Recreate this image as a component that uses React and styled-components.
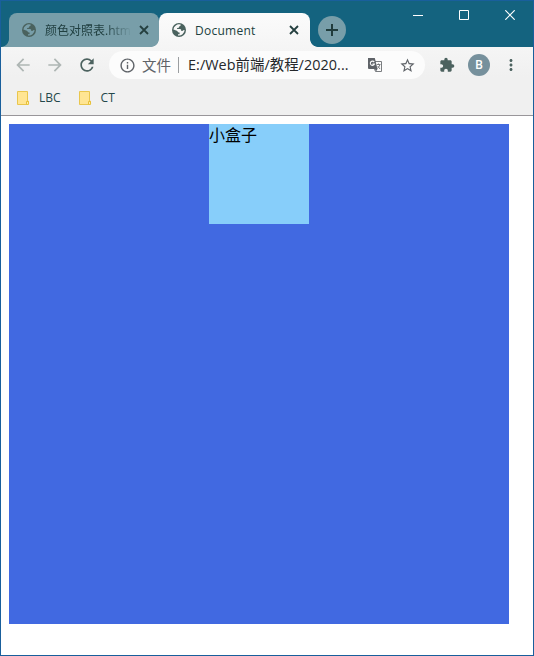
import React from "react";
import styled, { createGlobalStyle } from "styled-components";
import {
  MdArrowBack,
  MdArrowForward,
  MdRefresh,
  MdInfoOutline,
  MdStarBorder,
  MdExtension,
  MdMoreVert,
} from "react-icons/md";

const GlobalStyle = createGlobalStyle`
  * { box-sizing: border-box; }
  html, body { margin: 0; padding: 0; }
  body { font-family: "Open Sans", "Noto Sans CJK SC", sans-serif; }
`;

const Window = styled.div`
  width: 534px;
  height: 656px;
  border: 1px solid #195f9c;
  background: #fff;
  display: flex;
  flex-direction: column;
  overflow: hidden;
`;

const TabStrip = styled.div`
  height: 46px;
  flex: none;
  background: #14637f;
  display: flex;
  padding-left: 8px;
`;

const Tab = styled.div`
  position: relative;
  z-index: ${(p) => (p.$active ? 1 : 0)};
  width: ${(p) => (p.$active ? 151 : 150)}px;
  height: 34px;
  margin-top: 12px;
  padding: 0 ${(p) => (p.$active ? 10 : 9)}px 0 13px;
  display: flex;
  align-items: center;
  border-radius: 8px 8px 0 0;
  background: ${(p) => (p.$active ? "linear-gradient(#fbfbfb, #f5f5f5)" : "#789ea9")};
  &::before,
  &::after {
    content: "";
    position: absolute;
    bottom: 0;
    width: 8px;
    height: 8px;
  }
  &::before {
    left: -8px;
    background: radial-gradient(circle at 0 0, transparent 7.5px, ${(p) => (p.$active ? "#f5f5f5" : "#789ea9")} 8.2px);
  }
  &::after {
    right: -8px;
    background: radial-gradient(circle at 100% 0, transparent 7.5px, ${(p) => (p.$active ? "#f5f5f5" : "#789ea9")} 8.2px);
  }
`;

const TabTitle = styled.span`
  flex: 1;
  min-width: 0;
  margin-left: 9px;
  margin-right: 8px;
  padding-top: 1px;
  overflow: hidden;
  white-space: nowrap;
  font-size: 12px;
  line-height: 18px;
  letter-spacing: ${(p) => (p.$fade ? 0 : 0.25)}px;
  color: #203f40;
  ${(p) => p.$fade && "mask-image: linear-gradient(90deg, #000 72%, transparent 102%);"}
`;

const NewTab = styled.div`
  width: 28px;
  height: 28px;
  margin: 15px 0 0 8px;
  border-radius: 50%;
  background: #789ea9;
  display: flex;
  align-items: center;
  justify-content: center;
`;

const WindowControls = styled.div`
  display: flex;
  margin-left: auto;
  height: 28px;
`;

const ControlButton = styled.div`
  width: 46px;
  display: flex;
  align-items: center;
  justify-content: center;
`;

const Chrome = styled.div`
  height: 69px;
  flex: none;
  background: linear-gradient(#f5f5f5, #f0f0f0 30px);
  border-bottom: 1px solid #99969a;
`;

const Toolbar = styled.div`
  height: 36px;
  display: flex;
  align-items: center;
  color: #4c625f;
`;

const ToolButton = styled.div`
  width: 32px;
  height: 20px;
  display: flex;
  align-items: center;
  justify-content: center;
  color: ${(p) => (p.$disabled ? "#aeb6b4" : "#4c625f")};
`;

const Nav = styled.div`
  display: flex;
  width: 108px;
  padding-left: 6px;
`;

const Omnibox = styled.div`
  width: 316px;
  height: 28px;
  border-radius: 14px;
  background: #fcfcfc;
  display: flex;
  align-items: center;
  padding: 0 8px 0 9.5px;
  color: #5f6368;
`;

const Scheme = styled.span`
  margin-left: 6.5px;
  width: 30px;
  font-family: "Noto Sans CJK SC", sans-serif;
  font-size: 14.5px;
  line-height: 20px;
  white-space: nowrap;
`;

const Divider = styled.span`
  width: 1px;
  height: 16px;
  margin: 0 9px 0 6px;
  background: #9b9ea1;
`;

const Address = styled.span`
  width: 179px;
  font-size: 14.4px;
  line-height: 20px;
  letter-spacing: 0.05px;
  white-space: nowrap;
  color: #25282b;
`;

const OmniIcon = styled.span`
  width: 17px;
  height: 17px;
  flex: none;
  margin-right: ${(p) => p.$gap || 0}px;
  svg { display: block; }
`;

const Actions = styled.div`
  display: flex;
  align-items: center;
  padding-left: 14px;
`;

const Avatar = styled.div`
  width: 22px;
  height: 22px;
  margin: 0 12px 0 13px;
  border-radius: 50%;
  background: #76909c;
  color: #fff;
  font: 500 12px/22px Roboto, sans-serif;
  text-align: center;
`;

const Bookmarks = styled.div`
  height: 30px;
  display: flex;
  align-items: center;
  padding-left: 16px;
  gap: 18px;
`;

const Bookmark = styled.div`
  display: flex;
  align-items: center;
  gap: 9px;
  font-size: 12px;
  line-height: 16px;
  color: #24474a;
  svg { display: block; }
`;

const Page = styled.main`
  flex: 1;
  padding: 8px;
`;

const OuterBox = styled.div`
  width: 500px;
  height: 500px;
  background: #4169e1;
`;

const InnerBox = styled.div`
  width: 100px;
  height: 100px;
  margin: 0 auto;
  background: #87cefa;
  font-family: "Noto Sans CJK SC", sans-serif;
  font-size: 16px;
  line-height: 21px;
  color: #000;
`;

const Globe = () => (
  <svg width="14" height="14" viewBox="0 0 14 14">
    <circle cx="7" cy="7" r="7" fill="#4a625e" />
    <path
      d="M8.6 1.6C9 2.4 8 3.2 7.2 3.4L6.8 4.7 5.2 5 5 6H8C9.3 6.1 9.3 7.4 9.3 7.9H10.4C11.2 7.7 11.8 7 12.6 7.1A5.7 5.7 0 0 1 6 12.5V11.2H7.6V9.4H6.6L4.8 7.8 1.4 6.6A5.7 5.7 0 0 1 8.6 1.6Z"
      fill="currentColor"
    />
  </svg>
);

const Favicon = styled.span`
  width: 14px;
  height: 14px;
  color: ${(p) => (p.$active ? "#f7f7f7" : "#789ea9")};
  svg { display: block; }
`;

const TabClose = () => (
  <svg width="12" height="12" viewBox="0 0 12 12">
    <path d="M2 2l8 8M10 2l-8 8" stroke="#243f3f" strokeWidth="1.8" />
  </svg>
);

const Translate = () => (
  <svg width="16" height="16" viewBox="0 0 16 16" fill="none">
    <path d="M8 4.5H14.5V14.5H8.5L7.5 12" stroke="#7a7d80" />
    <path d="M1 1H7.8L10.5 12H2A1 1 0 0 1 1 11Z" fill="#5f6368" />
    <path d="M7.2 5.1A2.1 2.1 0 1 0 7.4 7H5.4" stroke="#fcfcfc" strokeWidth="1.1" />
    <path d="M9.8 7.5H13.5M11.5 6.5V7.5M12.8 7.8C12.3 9.6 11.4 10.5 10.5 11.3M10.7 9L13 12" stroke="#6e7174" strokeWidth=".9" />
    <path d="M8 12L9 14.5L10.5 12Z" fill="#5f6368" />
  </svg>
);

const Folder = () => (
  <svg width="13" height="15" viewBox="0 0 13 15">
    <path d="M.5 .5H10.5V10.2H11.5V13.5H.5Z" fill="#ffe593" stroke="#e9c64d" />
    <path d="M9.5 13.5V10.5H11.5V12.8L10.8 13.5Z" fill="#fff0a6" stroke="#e8bf38" />
  </svg>
);

const BrowserTab = ({ title, active }) => (
  <Tab $active={active}>
    <Favicon $active={active}><Globe /></Favicon>
    <TabTitle $fade={!active}>{title}</TabTitle>
    <TabClose />
  </Tab>
);

export default function App() {
  return (
    <>
      <GlobalStyle />
      <Window>
        <TabStrip>
          <BrowserTab title="颜色对照表.htm" />
          <BrowserTab title="Document" active />
          <NewTab>
            <svg width="12" height="12" viewBox="0 0 12 12">
              <path d="M6 0V12M0 6H12" stroke="#203c3c" strokeWidth="2" />
            </svg>
          </NewTab>
          <WindowControls>
            <ControlButton>
              <svg width="10" height="10"><path d="M0 5.5H10" stroke="#fff" /></svg>
            </ControlButton>
            <ControlButton>
              <svg width="10" height="10"><path d="M.5 .5H9.5V9.5H.5Z" fill="none" stroke="#fff" /></svg>
            </ControlButton>
            <ControlButton>
              <svg width="10" height="10"><path d="M.3 .3L9.7 9.7M9.7 .3L.3 9.7" stroke="#fff" strokeWidth="1.2" /></svg>
            </ControlButton>
          </WindowControls>
        </TabStrip>
        <Chrome>
          <Toolbar>
            <Nav>
              <ToolButton $disabled><MdArrowBack size={20} /></ToolButton>
              <ToolButton $disabled><MdArrowForward size={20} /></ToolButton>
              <ToolButton><MdRefresh size={20} /></ToolButton>
            </Nav>
            <Omnibox>
              <OmniIcon><MdInfoOutline size={17} /></OmniIcon>
              <Scheme>文件</Scheme>
              <Divider />
              <Address>E:/Web前端/教程/2020...</Address>
              <OmniIcon $gap={15}><Translate /></OmniIcon>
              <OmniIcon><MdStarBorder size={17} /></OmniIcon>
            </Omnibox>
            <Actions>
              <MdExtension size={16} />
              <Avatar>B</Avatar>
              <MdMoreVert size={18} />
            </Actions>
          </Toolbar>
          <Bookmarks>
            <Bookmark><Folder />LBC</Bookmark>
            <Bookmark><Folder />CT</Bookmark>
          </Bookmarks>
        </Chrome>
        <Page>
          <OuterBox>
            <InnerBox>小盒子</InnerBox>
          </OuterBox>
        </Page>
      </Window>
    </>
  );
}
